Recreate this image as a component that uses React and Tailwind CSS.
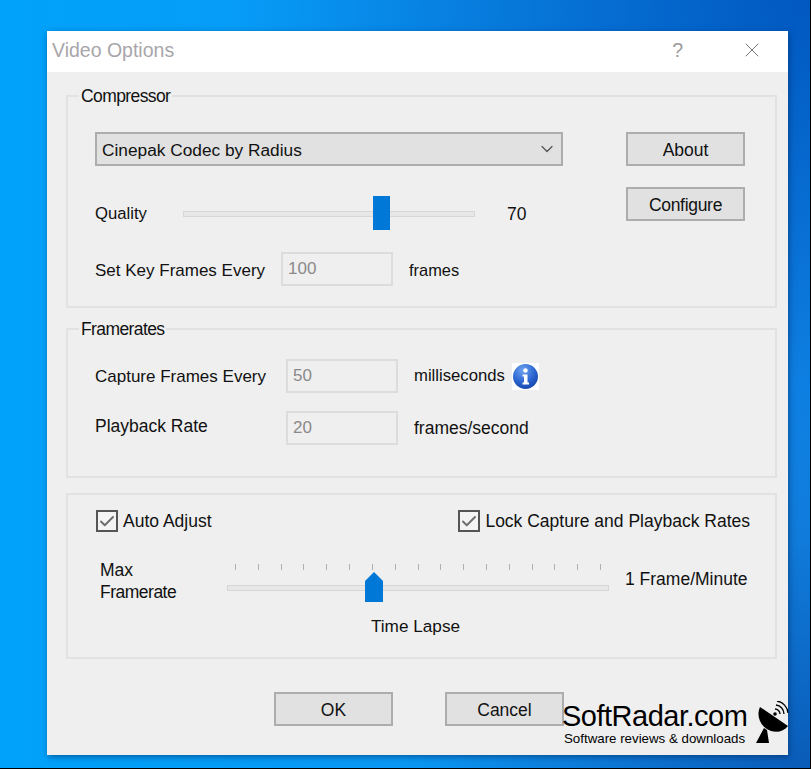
import { Check, ChevronDown, X } from "lucide-react";

const FONT = "font-['Liberation_Sans',sans-serif]";

const TICKS = Array.from({ length: 17 });

function TextBox({ value, className }) {
  return (
    <div className={`h-[34px] w-[112px] border-2 border-[#dcdcdc] bg-[#efefef] pl-[5px] text-[17px] leading-[29px] text-[#8a8a8a] ${className || ""}`}>
      {value}
    </div>
  );
}

function Button({ children, className }) {
  return (
    <button className={`h-[34px] w-[119px] border-2 border-[#adadad] bg-[#e1e1e1] pt-[2px] text-center leading-[28px] text-[#111] ${className || ""}`}>
      {children}
    </button>
  );
}

function CheckBox({ label }) {
  return (
    <div className="flex items-center">
      <div className="flex h-[22px] w-[22px] items-center justify-center border-2 border-[#555] bg-[#f4f4f4]">
        <Check size={19} strokeWidth={2.6} className="text-[#6e6e6e]" />
      </div>
      <span className="ml-[5px]">{label}</span>
    </div>
  );
}

function Group({ title, className, children }) {
  return (
    <fieldset className={`border-2 border-[#e2e2e2] ${className}`}>
      {title && <legend className="ml-[11px] px-[2px] leading-[20px] tracking-[-0.6px] text-[#111]">{title}</legend>}
      {children}
    </fieldset>
  );
}

function InfoIcon() {
  return (
    <svg width="27" height="27" viewBox="0 0 27 27" className="ml-[7px] bg-white">
      <defs>
        <radialGradient id="info" cx="40%" cy="25%" r="80%">
          <stop offset="0" stopColor="#6ea4ee" />
          <stop offset="0.6" stopColor="#2a64d0" />
          <stop offset="1" stopColor="#1646a8" />
        </radialGradient>
      </defs>
      <circle cx="13.5" cy="13.5" r="12.5" fill="url(#info)" />
      <circle cx="13.5" cy="7.5" r="2.2" fill="#fff" />
      <path d="M10.5 11.5 H15.5 V19.5 H17 V21.5 H10.5 V19.5 H12 V13.5 H10.5 Z" fill="#fff" />
    </svg>
  );
}

function Radar() {
  return (
    <svg width="36" height="44" viewBox="0 0 36 44" className="ml-[8px] shrink-0">
      <path d="M5 6 C1 15 5 26 16 30 C23 32 29 30 33 25 Z" fill="#000" />
      <path d="M9 27 L1 42 L14 42 L12 29 Z" fill="#000" />
      <circle cx="20" cy="13" r="1.8" fill="#000" />
      <path d="M20 8 a5 5 0 0 1 5 5 M21 4 a9 9 0 0 1 8 9 M22 0 a13 13 0 0 1 11 12" fill="none" stroke="#000" strokeWidth="1.3" />
    </svg>
  );
}

export default function App() {
  return (
    <div className={`relative h-[769px] w-[811px] overflow-hidden border-r border-b border-black bg-[radial-gradient(ellipse_at_100%_0%,#0058c0_0%,transparent_50%),radial-gradient(ellipse_at_100%_100%,#0a5cb8_0%,transparent_35%),linear-gradient(90deg,#00a2fa,#148ff0)] pl-[47px] pt-[31px] text-[17.5px] leading-[26px] ${FONT}`}>
      <div className="h-[724px] w-[741px] bg-[#efefef] shadow-[1px_2px_6px_rgba(0,40,90,0.55)]">
        {/* Title bar */}
        <div className="flex h-[41px] items-center bg-white pb-[3px] pl-[5px] text-[19.5px] text-[#a8a6aa]">
          <span>Video Options</span>
          <span className="ml-auto text-[#9a9a9a]">?</span>
          <X size={24} strokeWidth={1} className="ml-[57px] mr-[24px] text-[#777]" />
        </div>

        <div className="pl-[19px] pr-[11px] pt-[14px] text-[#111]">
          {/* Compressor */}
          <Group title="Compressor" className="h-[222px]">
            <div className="flex pl-[27px] pt-[26px]">
              <div className="w-[468px]">
                <div className="flex h-[34px] items-center justify-between border-2 border-[#adadad] bg-[#e1e1e1] pl-[5px] pr-[4px]">
                  <span className="pt-[2px] text-[17.3px]">Cinepak Codec by Radius</span>
                  <ChevronDown size={20} strokeWidth={1.5} className="text-[#555]" />
                </div>
                <div className="mt-[30px] flex h-[36px] items-center">
                  <span className="w-[88px] text-[16.7px]">Quality</span>
                  <div className="relative h-[6px] w-[292px] border border-[#d6d6d6] bg-[#e7e7e7]">
                    <div className="absolute left-[189px] top-[-16px] h-[34px] w-[17px] bg-[#0078d7]" />
                  </div>
                  <span className="ml-[32px]">70</span>
                </div>
                <div className="mt-[20px] flex items-center">
                  <span className="w-[186px] pt-[3px] text-[17px]">Set Key Frames Every</span>
                  <TextBox value="100" />
                  <span className="ml-[16px] pt-[2px] text-[16.4px]">frames</span>
                </div>
              </div>
              <div className="ml-[63px] flex flex-col gap-[21px]">
                <Button>About</Button>
                <Button className="tracking-[-0.3px]">Configure</Button>
              </div>
            </div>
          </Group>

          {/* Framerates */}
          <Group title="Framerates" className="mt-[11px] h-[159px]">
            <div className="flex flex-col gap-[18px] pl-[27px] pt-[20px]">
              <div className="flex h-[34px] items-center">
                <span className="w-[191px] pt-[2px] text-[17px]">Capture Frames Every</span>
                <TextBox value="50" />
                <span className="ml-[16px] text-[16.7px]">milliseconds</span>
                <InfoIcon />
              </div>
              <div className="flex h-[34px] items-center">
                <span className="mb-[5px] w-[191px]">Playback Rate</span>
                <TextBox value="20" />
                <span className="ml-[16px]">frames/second</span>
              </div>
            </div>
          </Group>

          {/* Frame limits */}
          <Group className="mt-[15px] h-[166px]">
            <div className="flex items-center justify-between pl-[28px] pr-[25px] pt-[13px]">
              <CheckBox label="Auto Adjust" />
              <CheckBox label="Lock Capture and Playback Rates" />
            </div>
            <div className="mt-[25px] flex pl-[32px]">
              <div className="w-[127px] leading-[22px]">
                <div>Max</div>
                <div className="tracking-[-0.5px]">Framerate</div>
              </div>
              <div className="w-[382px] pt-[5px]">
                <div className="flex h-[8px] justify-between px-[8px]">
                  {TICKS.map((_, i) => (
                    <div key={i} className="h-[6px] w-px bg-[#b0b0b0]" />
                  ))}
                </div>
                <div className="relative mt-[13px] h-[6px] border border-[#d6d6d6] bg-[#e7e7e7]">
                  <div className="absolute left-[137px] top-[-14px]">
                    <svg width="18" height="30" viewBox="0 0 18 30" className="block">
                      <path d="M9 0 L18 9 V30 H0 V9 Z" fill="#0078d7" />
                    </svg>
                  </div>
                </div>
                <div className="mt-[22px] pr-[5px] text-center text-[17.2px]">Time Lapse</div>
              </div>
              <span className="ml-[16px] mt-[7px]">1 Frame/Minute</span>
            </div>
          </Group>

          {/* Footer buttons */}
          <div className="mt-[33px] flex pl-[208px]">
            <Button>OK</Button>
            <Button className="ml-[52px]">Cancel</Button>
          </div>
        </div>
      </div>

      {/* Watermark */}
      <div className="absolute left-[562px] top-[701px] flex text-black">
        <div>
          <div className="text-[29px] leading-[31px] tracking-[-0.5px]">SoftRadar.com</div>
          <div className="pl-[2px] text-[13.3px] leading-[14px]">Software reviews &amp; downloads</div>
        </div>
        <Radar />
      </div>
    </div>
  );
}
